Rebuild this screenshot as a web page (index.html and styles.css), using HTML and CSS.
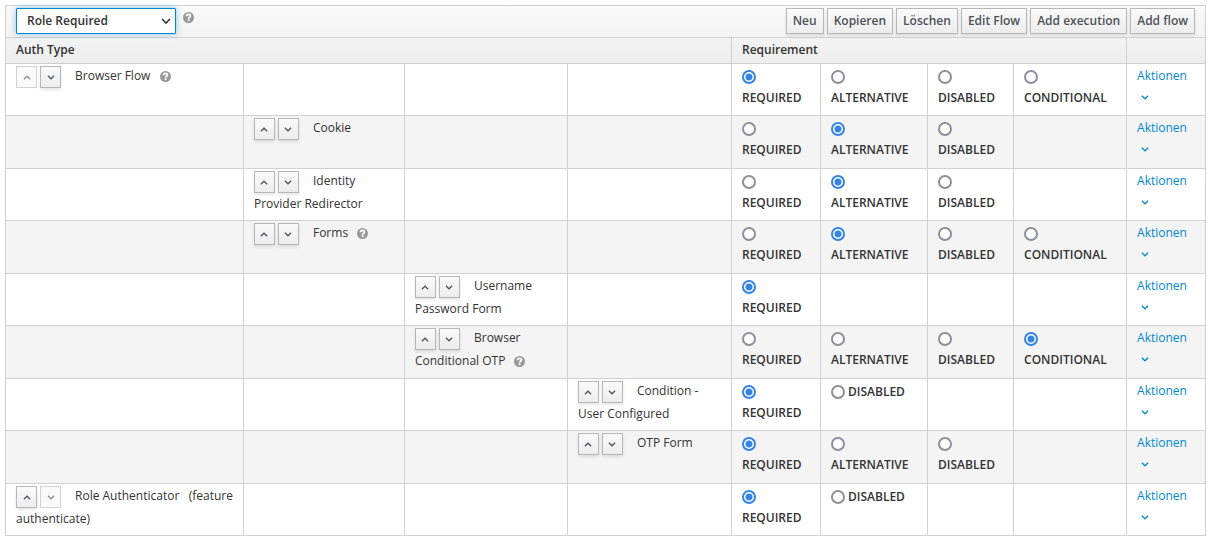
FILE: index.html
```html
<!DOCTYPE html>
<html lang="de">
<head>
<meta charset="utf-8">
<title>Authentication Flows</title>
<link rel="stylesheet" href="styles.css">
</head>
<body>
<svg class="sprite" aria-hidden="true">
  <symbol id="up" viewBox="0 0 8 5"><path d="M.9 4.2 4 1.2 7.1 4.2" fill="none" stroke="currentColor" stroke-width="1.2"/></symbol>
  <symbol id="down" viewBox="0 0 8 5"><path d="M.9 .8 4 3.8 7.1 .8" fill="none" stroke="currentColor" stroke-width="1.2"/></symbol>
  <symbol id="help" viewBox="0 0 11 11"><circle cx="5.5" cy="5.5" r="5.5" fill="#999"/><path d="M3.4 4.3C3.5 3 4.4 2.4 5.5 2.4S7.5 3 7.5 4.1C7.5 5.3 5.6 5.2 5.6 6.7" fill="none" stroke="#fff" stroke-width="1.6"/><path d="M4.7 7.3h1.8v1.7H4.7z" fill="#fff"/></symbol>
</svg>
<main>
<table class="flows">
  <colgroup>
    <col class="c-level1"><col class="c-level2"><col class="c-level3"><col class="c-level4">
    <col class="c-required"><col class="c-alternative"><col class="c-disabled"><col class="c-conditional"><col class="c-actions">
  </colgroup>
  <thead>
    <tr class="toolbar-row">
      <th colspan="9">
        <div class="toolbar">
          <div class="picker">
            <select class="flow-select" aria-label="Flow"><option>Role Required</option></select>
            <svg class="select-arrow" viewBox="0 0 10 6" aria-hidden="true"><path d="M1 1 5 5 9 1" fill="none" stroke="currentColor" stroke-width="1.6"/></svg>
          </div>
          <svg class="help"><use href="#help"/></svg>
          <div class="toolbar-actions">
            <button class="btn">Neu</button>
            <button class="btn">Kopieren</button>
            <button class="btn">Löschen</button>
            <button class="btn">Edit Flow</button>
            <button class="btn">Add execution</button>
            <button class="btn">Add flow</button>
          </div>
        </div>
      </th>
    </tr>
    <tr class="heading-row"><th colspan="4">Auth Type</th><th colspan="4">Requirement</th><th></th></tr>
  </thead>
  <tbody>
    <tr>
      <td><span class="order"><button class="move" aria-label="Up" disabled><svg><use href="#up"/></svg></button><button class="move" aria-label="Down"><svg><use href="#down"/></svg></button></span>Browser Flow <svg class="help"><use href="#help"/></svg></td>
      <td></td><td></td><td></td>
      <td><label class="choice"><input type="radio" name="r1" checked>REQUIRED</label></td>
      <td><label class="choice"><input type="radio" name="r1">ALTERNATIVE</label></td>
      <td><label class="choice"><input type="radio" name="r1">DISABLED</label></td>
      <td><label class="choice"><input type="radio" name="r1">CONDITIONAL</label></td>
      <td><button class="actions">Aktionen<svg><use href="#down"/></svg></button></td>
    </tr>
    <tr>
      <td></td>
      <td><span class="order"><button class="move" aria-label="Up"><svg><use href="#up"/></svg></button><button class="move" aria-label="Down"><svg><use href="#down"/></svg></button></span>Cookie</td>
      <td></td><td></td>
      <td><label class="choice"><input type="radio" name="r2">REQUIRED</label></td>
      <td><label class="choice"><input type="radio" name="r2" checked>ALTERNATIVE</label></td>
      <td><label class="choice"><input type="radio" name="r2">DISABLED</label></td>
      <td></td>
      <td><button class="actions">Aktionen<svg><use href="#down"/></svg></button></td>
    </tr>
    <tr>
      <td></td>
      <td><span class="order"><button class="move" aria-label="Up"><svg><use href="#up"/></svg></button><button class="move" aria-label="Down"><svg><use href="#down"/></svg></button></span>Identity Provider Redirector</td>
      <td></td><td></td>
      <td><label class="choice"><input type="radio" name="r3">REQUIRED</label></td>
      <td><label class="choice"><input type="radio" name="r3" checked>ALTERNATIVE</label></td>
      <td><label class="choice"><input type="radio" name="r3">DISABLED</label></td>
      <td></td>
      <td><button class="actions">Aktionen<svg><use href="#down"/></svg></button></td>
    </tr>
    <tr>
      <td></td>
      <td><span class="order"><button class="move" aria-label="Up"><svg><use href="#up"/></svg></button><button class="move" aria-label="Down"><svg><use href="#down"/></svg></button></span>Forms <svg class="help"><use href="#help"/></svg></td>
      <td></td><td></td>
      <td><label class="choice"><input type="radio" name="r4">REQUIRED</label></td>
      <td><label class="choice"><input type="radio" name="r4" checked>ALTERNATIVE</label></td>
      <td><label class="choice"><input type="radio" name="r4">DISABLED</label></td>
      <td><label class="choice"><input type="radio" name="r4">CONDITIONAL</label></td>
      <td><button class="actions">Aktionen<svg><use href="#down"/></svg></button></td>
    </tr>
    <tr>
      <td></td><td></td>
      <td><span class="order"><button class="move" aria-label="Up"><svg><use href="#up"/></svg></button><button class="move" aria-label="Down"><svg><use href="#down"/></svg></button></span>Username Password Form</td>
      <td></td>
      <td><label class="choice"><input type="radio" name="r5" checked>REQUIRED</label></td>
      <td></td><td></td><td></td>
      <td><button class="actions">Aktionen<svg><use href="#down"/></svg></button></td>
    </tr>
    <tr>
      <td></td><td></td>
      <td><span class="order"><button class="move" aria-label="Up"><svg><use href="#up"/></svg></button><button class="move" aria-label="Down"><svg><use href="#down"/></svg></button></span>Browser Conditional OTP <svg class="help"><use href="#help"/></svg></td>
      <td></td>
      <td><label class="choice"><input type="radio" name="r6">REQUIRED</label></td>
      <td><label class="choice"><input type="radio" name="r6">ALTERNATIVE</label></td>
      <td><label class="choice"><input type="radio" name="r6">DISABLED</label></td>
      <td><label class="choice"><input type="radio" name="r6" checked>CONDITIONAL</label></td>
      <td><button class="actions">Aktionen<svg><use href="#down"/></svg></button></td>
    </tr>
    <tr>
      <td></td><td></td><td></td>
      <td><span class="order"><button class="move" aria-label="Up"><svg><use href="#up"/></svg></button><button class="move" aria-label="Down"><svg><use href="#down"/></svg></button></span>Condition - User Configured</td>
      <td><label class="choice"><input type="radio" name="r7" checked>REQUIRED</label></td>
      <td><label class="choice"><input type="radio" name="r7">DISABLED</label></td>
      <td></td><td></td>
      <td><button class="actions">Aktionen<svg><use href="#down"/></svg></button></td>
    </tr>
    <tr>
      <td></td><td></td><td></td>
      <td><span class="order"><button class="move" aria-label="Up"><svg><use href="#up"/></svg></button><button class="move" aria-label="Down"><svg><use href="#down"/></svg></button></span>OTP Form</td>
      <td><label class="choice"><input type="radio" name="r8" checked>REQUIRED</label></td>
      <td><label class="choice"><input type="radio" name="r8">ALTERNATIVE</label></td>
      <td><label class="choice"><input type="radio" name="r8">DISABLED</label></td>
      <td></td>
      <td><button class="actions">Aktionen<svg><use href="#down"/></svg></button></td>
    </tr>
    <tr>
      <td><span class="order"><button class="move" aria-label="Up"><svg><use href="#up"/></svg></button><button class="move" aria-label="Down" disabled><svg><use href="#down"/></svg></button></span>Role Authenticator&nbsp;&nbsp; (feature authenticate)</td>
      <td></td><td></td><td></td>
      <td><label class="choice"><input type="radio" name="r9" checked>REQUIRED</label></td>
      <td><label class="choice"><input type="radio" name="r9">DISABLED</label></td>
      <td></td><td></td>
      <td><button class="actions">Aktionen<svg><use href="#down"/></svg></button></td>
    </tr>
  </tbody>
</table>
</main>
</body>
</html>
```
FILE: styles.css
```css
* { box-sizing: border-box; }
body {
  margin: 0;
  padding: 5px 6px 5px 5px;
  background: #fff;
  color: #333;
  font: 12px/23px "Open Sans", sans-serif;
}
button, select { font: inherit; color: inherit; }
.sprite { display: none; }

.flows {
  width: 100%;
  table-layout: fixed;
  border-collapse: collapse;
  border: 1px solid #d1d1d1;
}
.c-level1 { width: 19.83%; }
.c-level2 { width: 13.42%; }
.c-level3 { width: 13.58%; }
.c-level4 { width: 13.67%; }
.c-required { width: 7.42%; }
.c-alternative { width: 8.92%; }
.c-disabled { width: 7.17%; }
.c-conditional { width: 9.42%; }
.c-actions { width: 6.57%; }

.flows thead { background: linear-gradient(#fafafa, #ededed); }
.flows th {
  padding: 0 10px 2px;
  border: 1px solid #d1d1d1;
  font-weight: 600;
  text-align: left;
}
.toolbar-row { height: 32px; }
.heading-row { height: 26px; }
.flows td {
  padding: 0 8px 0 10px;
  border: 1px solid #d1d1d1;
  vertical-align: top;
}
.flows tbody tr { height: 52px; }
.flows tbody tr:nth-child(even) { height: 53px; background: #f4f4f4; }

.toolbar { display: flex; align-items: center; height: 26px; }
.picker { display: grid; align-items: center; }
.flow-select, .select-arrow { grid-area: 1 / 1; }
.flow-select {
  appearance: none;
  width: 160px;
  height: 26px;
  padding: 0 10px;
  border: 1px solid #0088ce;
  border-radius: 1px;
  background: #fff;
  font-weight: 600;
  box-shadow: 0 0 6px rgba(0, 136, 206, 0.45);
}
.select-arrow {
  justify-self: end;
  width: 10px;
  height: 6px;
  margin: 1px 5px 0 0;
  pointer-events: none;
}
.help {
  width: 11px;
  height: 11px;
  margin-left: 6px;
  vertical-align: -2px;
}
.toolbar .help { align-self: flex-start; margin: 4px 0 0 7px; }
.toolbar-actions { display: flex; gap: 3px; margin-left: auto; }

.btn, .move {
  border: 1px solid #b7b7b7;
  background: linear-gradient(#fafafa, #ededed);
  color: #4d5258;
  box-shadow: 0 2px 3px rgba(3, 3, 3, 0.1);
}
.btn {
  height: 26px;
  padding: 0 6px;
  line-height: 22px;
  font-weight: 600;
}
.order {
  display: inline-flex;
  gap: 3px;
  margin: 2px 14px -2px 0;
  vertical-align: top;
}
.move {
  display: flex;
  align-items: center;
  justify-content: center;
  width: 21px;
  height: 22px;
  padding: 0;
}
.move svg { width: 8px; height: 5px; }
.move:disabled {
  border-color: #d1d1d1;
  background: #fafafa;
  color: #8b8d8f;
  box-shadow: none;
}

.choice {
  display: block;
  padding-top: 2px;
  margin-right: -2px;
  line-height: 21px;
  font-weight: 600;
}
.choice input {
  appearance: none;
  width: 14px;
  height: 14px;
  margin: 4px 3px 3px 0;
  border: 2px solid #8f8f9d;
  border-radius: 50%;
  background: #fff;
  vertical-align: top;
}
.choice input:checked {
  border-color: #3584e4;
  background: radial-gradient(circle, #3584e4 3px, #fff 4px);
}

.actions {
  display: flex;
  flex-direction: column;
  padding: 0;
  border: 0;
  background: none;
  color: #0088ce;
}
.actions svg { width: 8px; height: 5px; margin: 8px 0 0 4px; }
```
